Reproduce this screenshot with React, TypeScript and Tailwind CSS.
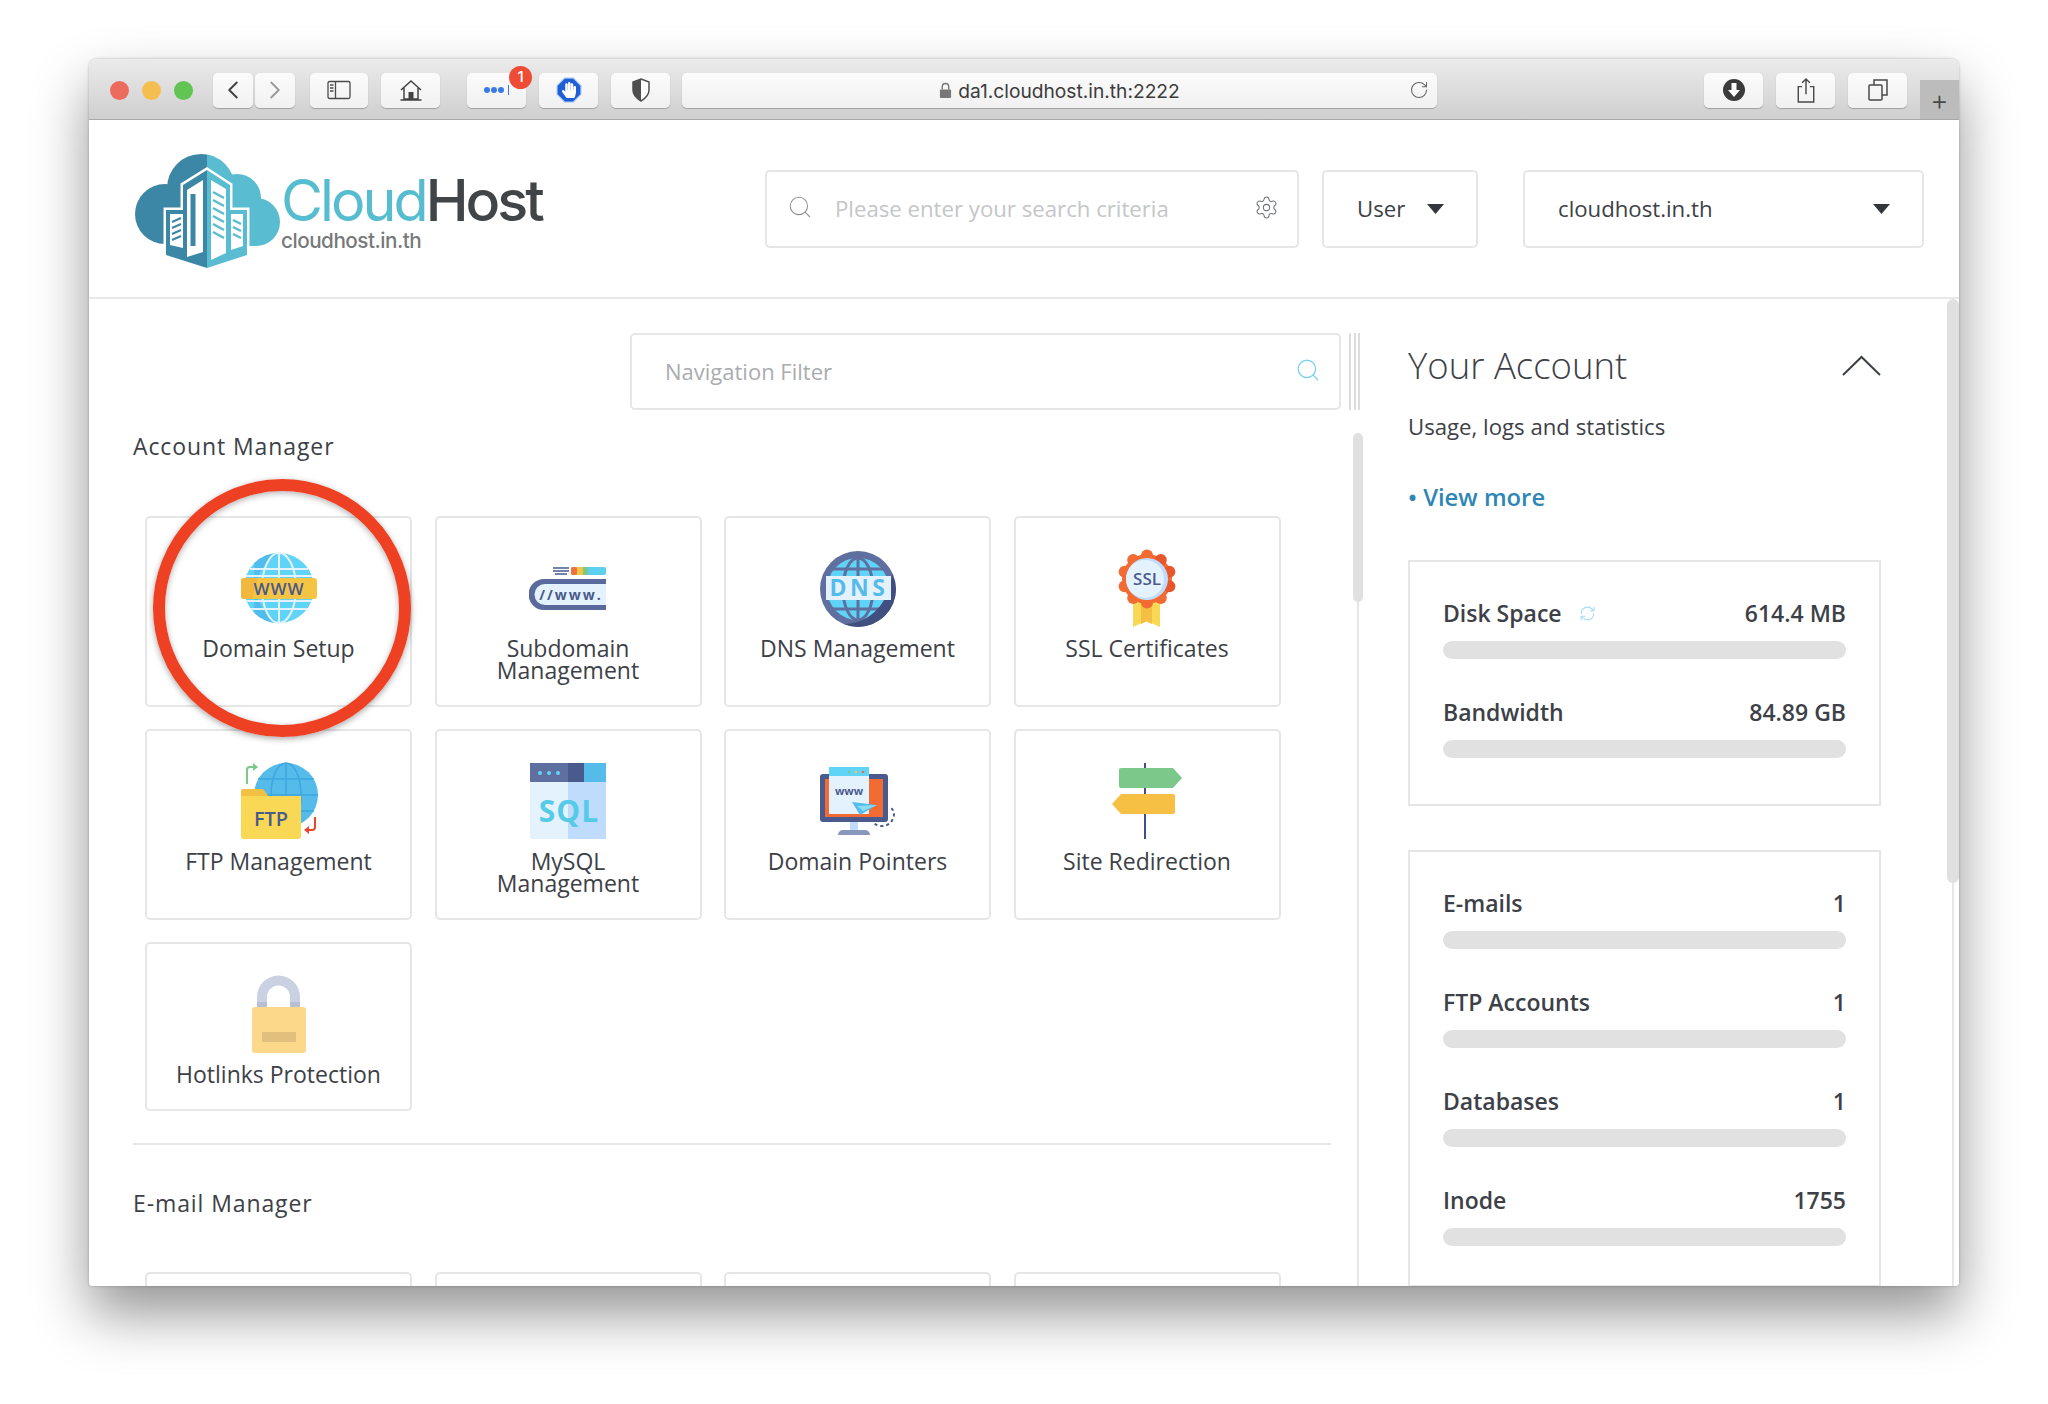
import { ChevronLeft, ChevronRight, RefreshCw, RotateCw, Search, Settings } from 'lucide-react'
import { FaHandPaper } from 'react-icons/fa'
import type { ReactNode } from 'react'

const ink = '#4a5a8c'
const sky = '#55bbeb'
const pale = '#e4f2fe'

function Box({ children }: { children: ReactNode }) {
  return (
    <svg viewBox="0 0 78 78" className="w-[78px] h-[78px] shrink-0">
      {children}
    </svg>
  )
}

function SvgLabel({ x, y, size, fill, children, spacing = 0, weight = '700' }: { x: number; y: number; size: number; fill: string; children: string; spacing?: number; weight?: string }) {
  return (
    <text x={x} y={y} fontSize={size} fill={fill} fontWeight={weight} textAnchor="middle" letterSpacing={spacing} fontFamily="'Open Sans', sans-serif">
      {children}
    </text>
  )
}

function DomainIcon() {
  return (
    <Box>
      <circle cx="39" cy="39" r="35" fill="#5fd4f6" />
      <path d="M39 4a35 35 0 0 0-24.700 10v50a35 35 0 0 0 24.700 10c-14-10-23-20-23-35s9-25 23-35z" fill="#50bdec" />
      <g fill="none" stroke="#e3f3fe" strokeWidth="2">
        <ellipse cx="39" cy="39" rx="17" ry="35" />
        <path d="M39 4v70M10 20h58M6 27h66M6 52h66M10 60h58" />
      </g>
      <rect x="1" y="29" width="76" height="21" rx="3" fill="#f5c445" />
      <path d="M1 32a3 3 0 0 1 3-3h14l-6 21H4a3 3 0 0 1-3-3z" fill="#f2b83e" />
      <SvgLabel x={39} y={46} size={17} fill={ink} spacing={1} weight="600">WWW</SvgLabel>
    </Box>
  )
}

function SubdomainIcon() {
  return (
    <Box>
      <path d="M77 30H15a15 15 0 0 0 0 31h62z" fill="#5a6a9c" />
      <path d="M77 35H16a10.500 10.500 0 0 0 0 21h61z" fill={pale} />
      <g stroke={ink} strokeWidth="1.500">
        <path d="M24 19h16M24 22h16M26 25h12" />
      </g>
      <rect x="42" y="18" width="35" height="8" rx="2" fill="#5ed0ef" />
      <rect x="42" y="18" width="6" height="8" rx="2" fill="#f2703a" />
      <rect x="48" y="18" width="6" height="8" fill="#f5c445" />
      <rect x="54" y="18" width="5" height="8" fill="#7cc78a" />
      <SvgLabel x={42} y={51} size={14} fill={ink} spacing={2}>//www.</SvgLabel>
    </Box>
  )
}

function DnsIcon() {
  return (
    <Box>
      <circle cx="39" cy="40" r="38" fill="#5f6f9f" />
      <circle cx="39" cy="40" r="31" fill="#5fd4f6" />
      <g fill="none" stroke="#5f6f9f" strokeWidth="3">
        <ellipse cx="39" cy="40" rx="15" ry="31" />
        <path d="M39 8v64M12 20h54M12 60h54" />
      </g>
      <path d="M77 40a38 38 0 0 1-38 38 36 36 0 0 1-14-3c20 0 44-14 48-50a38 38 0 0 1 4 15z" fill="#414f80" />
      <rect x="7" y="27" width="65" height="24" fill={pale} />
      <SvgLabel x={40} y={47} size={23} fill={sky} spacing={3.5} weight="700">DNS</SvgLabel>
    </Box>
  )
}

function SslIcon() {
  const scallops = Array.from({ length: 10 }, (_, i) => {
    const a = (i / 10) * Math.PI * 2 - Math.PI / 2
    return { cx: 39 + Math.cos(a) * 23.500, cy: 30 + Math.sin(a) * 23.500 }
  })
  return (
    <Box>
      <path d="M25 50h27v28l-13.500-6L25 78z" fill="#f9d855" />
      <path d="M33 50h11v25l-5.500-2.500L33 75z" fill="#f4c043" />
      <circle cx="39" cy="30" r="25" fill="#f26b33" />
      {scallops.map((s, i) => (
        <circle key={i} cx={s.cx} cy={s.cy} r="6" fill={i > 0 && i < 4 ? '#e8562c' : '#f26b33'} />
      ))}
      <circle cx="39" cy="30" r="21" fill="#bfdcfd" />
      <circle cx="37" cy="30" r="19" fill={pale} />
      <SvgLabel x={39} y={36} size={17} fill={ink} weight="600">SSL</SvgLabel>
    </Box>
  )
}

function FtpIcon() {
  return (
    <Box>
      <circle cx="46" cy="33" r="32" fill={sky} />
      <g fill="none" stroke="#3fa6de" strokeWidth="1.500">
        <ellipse cx="46" cy="33" rx="15" ry="32" />
        <path d="M46 1v64M18 17h56M14 33h64M18 49h56" />
      </g>
      <path d="M1 29a2 2 0 0 1 2-2h20l6 8h30a2 2 0 0 1 2 2v8H1z" fill="#f4c043" />
      <path d="M1 34h60v40a3 3 0 0 1-3 3H4a3 3 0 0 1-3-3z" fill="#f9d855" />
      <SvgLabel x={31} y={64} size={20} fill={ink} weight="600">FTP</SvgLabel>
      <path d="M7 22V8a3 3 0 0 1 3-3h5" fill="none" stroke="#7cc78a" strokeWidth="2" />
      <path d="M13 1l5 4-5 4z" fill="#7cc78a" />
      <path d="M75 55v10a3 3 0 0 1-3 3h-5" fill="none" stroke="#e5482d" strokeWidth="2" />
      <path d="M69 64l-5 4 5 4z" fill="#e5482d" />
    </Box>
  )
}

function SqlIcon() {
  return (
    <Box>
      <rect x="1" y="1" width="76" height="76" rx="2" fill={pale} />
      <rect x="39" y="19" width="38" height="58" fill="#bfdcfd" />
      <rect x="1" y="1" width="38" height="19" fill="#5f6f9f" />
      <rect x="39" y="1" width="16" height="19" fill={ink} />
      <rect x="55" y="1" width="22" height="19" fill={sky} />
      <circle cx="11" cy="11" r="2" fill="#5fd4f6" />
      <circle cx="20" cy="11" r="2" fill="#5fd4f6" />
      <circle cx="29" cy="11" r="2" fill="#5fd4f6" />
      <SvgLabel x={40} y={60} size={30} fill="#55cbe8" spacing={1}>SQL</SvgLabel>
    </Box>
  )
}

function PointerIcon() {
  return (
    <Box>
      <rect x="1" y="12" width="68" height="48" rx="3" fill={ink} />
      <rect x="6" y="17" width="58" height="38" fill="#f26b33" />
      <rect x="31" y="60" width="8" height="8" fill="#bfdcfd" />
      <path d="M19 73a5 5 0 0 1 5-5h22a5 5 0 0 1 5 5z" fill="#8a97bd" />
      <rect x="10" y="5" width="40" height="47" rx="1" fill={pale} />
      <rect x="10" y="5" width="40" height="9" fill="#5fd4f6" />
      <circle cx="30" cy="10" r="1.300" fill="#7cc78a" />
      <circle cx="37" cy="10" r="1.300" fill="#f5c445" />
      <circle cx="44" cy="10" r="1.300" fill="#f26b33" />
      <SvgLabel x={30} y={33} size={11} fill={ink}>www</SvgLabel>
      <path d="M33 40l25 3-17 10z" fill="#55bbeb" />
      <path d="M38 44l20-1-14 6z" fill="#8cdcf4" />
      <path d="M52 57a12 12 0 0 0 20 3c4-5 4-11 0-14" fill="none" stroke={ink} strokeWidth="2" strokeDasharray="3 3" />
    </Box>
  )
}

function SignIcon() {
  return (
    <Box>
      <rect x="36" y="1" width="2" height="76" fill="#3f4f8c" />
      <path d="M13 6h52l9 10-9 10H13a2 2 0 0 1-2-2V8a2 2 0 0 1 2-2z" fill="#7cc78a" />
      <path d="M13 32h52a2 2 0 0 1 2 2v16a2 2 0 0 1-2 2H13L4 42z" fill="#f5c043" />
    </Box>
  )
}

function LockIcon() {
  return (
    <Box>
      <path d="M17 32V22a21.500 21.500 0 0 1 43 0v10h-10V22a11.500 11.500 0 0 0-23 0v10z" fill="#c9d1e3" />
      <rect x="17" y="27" width="10" height="6" fill="#b6bfd4" />
      <rect x="50" y="27" width="10" height="6" fill="#b6bfd4" />
      <rect x="12" y="32" width="54" height="46" rx="3" fill="#fbd88a" />
      <rect x="22" y="57" width="34" height="10" fill="#e0c07c" />
    </Box>
  )
}

function CloudShape({ fill, clip }: { fill: string; clip: string }) {
  return (
    <g fill={fill} clipPath={clip}>
      <circle cx="30" cy="60" r="30" />
      <circle cx="66" cy="34" r="34" />
      <circle cx="102" cy="44" r="24" />
      <circle cx="121" cy="68" r="24" />
      <rect x="30" y="50" width="92" height="42" />
    </g>
  )
}

function CloudLogo() {
  const building = 'M72 16l23 15v25l17 0v45l-40 13-41-13V56l17 0V31z'
  return (
    <svg viewBox="0 0 145 114" className="w-[145px] h-[114px] shrink-0">
      <defs>
        <clipPath id="logo-left"><rect x="0" y="0" width="72" height="114" /></clipPath>
        <clipPath id="logo-right"><rect x="72" y="0" width="73" height="114" /></clipPath>
      </defs>
      <CloudShape fill="#3d87a6" clip="url(#logo-left)" />
      <CloudShape fill="#59bcd0" clip="url(#logo-right)" />
      <path d={building} fill="#ffffff" stroke="#ffffff" strokeWidth="5" />
      <path d={building} fill="#3d87a6" clipPath="url(#logo-left)" />
      <path d={building} fill="#59bcd0" clipPath="url(#logo-right)" />
      <path d="M52 36l16-10v72l-16 5zM35 60h13v34l-13-3z" fill="#ffffff" />
      <path d="M76 26l15 9v64l-15 7zM96 60h12v32l-12 4z" fill="#ffffff" />
      <g stroke="#3d87a6" strokeWidth="2">
        <path d="M37 68l9-4M37 74l9-4M37 80l9-4M37 86l9-4" />
        <path d="M58 40v52" strokeWidth="5" />
      </g>
      <g stroke="#59bcd0" strokeWidth="2.500">
        <path d="M78 38l11 6M78 46l11 6M78 54l11 6M78 62l11 6M78 70l11 6M78 78l11 6M98 66l8 4M98 73l8 4M98 80l8 4" />
      </g>
    </svg>
  )
}

function ToolBtn({ children, className }: { children: ReactNode; className: string }) {
  return (
    <div className={`relative h-[35px] flex items-center justify-center rounded-[5px] bg-gradient-to-b from-[#fbfbfb] to-[#f1f1f1] shadow-[0_1px_1px_rgba(0,0,0,0.25)] ${className}`}>
      {children}
    </div>
  )
}

function Toolbar() {
  return (
    <div className="relative h-[61px] shrink-0 flex items-center pl-[21px] pt-[2px] bg-gradient-to-b from-[#ebebeb] to-[#cfcfcf] border-b border-[#a8a8a8]">
      <span className="w-[19px] h-[19px] rounded-full bg-[#ed6a5e]" />
      <span className="ml-[13px] w-[19px] h-[19px] rounded-full bg-[#f5bf4f]" />
      <span className="ml-[13px] w-[19px] h-[19px] rounded-full bg-[#61c554]" />
      <ToolBtn className="ml-[20px] w-[40px]">
        <ChevronLeft className="w-[30px] h-[30px] text-[#3f3f3f]" strokeWidth={1.5} />
      </ToolBtn>
      <ToolBtn className="ml-[2px] w-[40px]">
        <ChevronRight className="w-[30px] h-[30px] text-[#9a9a9a]" strokeWidth={1.5} />
      </ToolBtn>
      <ToolBtn className="ml-[15px] w-[58px]">
        <svg viewBox="0 0 24 20" className="w-[24px] h-[20px]" fill="none" stroke="#4a4a4a" strokeWidth="1.300">
          <rect x="1" y="1.500" width="22" height="17" rx="1.500" />
          <path d="M8.500 1.500v17M3 5h3.500M3 8h3.500M3 11h3.500" />
        </svg>
      </ToolBtn>
      <ToolBtn className="ml-[13px] w-[59px]">
        <svg viewBox="0 0 24 24" className="w-[24px] h-[24px]" fill="none" stroke="#444444" strokeWidth="1.500">
          <path d="M2 12L12 3l10 9M5 10v11h14V10M1.500 22h21" />
          <rect x="9.500" y="14" width="5" height="7" fill="#444444" stroke="none" />
        </svg>
      </ToolBtn>
      <ToolBtn className="ml-[27px] w-[59px]">
        <svg viewBox="0 0 28 10" className="w-[28px] h-[10px]">
          <circle cx="4" cy="5" r="3" fill="#3a78e8" />
          <circle cx="11" cy="5" r="3" fill="#3a78e8" />
          <circle cx="18" cy="5" r="3" fill="#3a78e8" />
          <rect x="25" y="0" width="1" height="10" fill="#3a78e8" />
        </svg>
        <span className="absolute -top-[7px] -right-[6px] w-[23px] h-[23px] rounded-full bg-[#ee4c36] text-white text-[15px] font-medium flex items-center justify-center font-['Inter',sans-serif]">1</span>
      </ToolBtn>
      <ToolBtn className="ml-[13px] w-[59px]">
        <svg viewBox="0 0 24 24" className="w-[26px] h-[26px]">
          <path d="M8 1h8l7 7v8l-7 7H8l-7-7V8z" fill="#1f5fd6" stroke="#9cc6f2" strokeWidth="1" />
        </svg>
        <FaHandPaper className="absolute w-[14px] h-[16px] text-white" />
      </ToolBtn>
      <ToolBtn className="ml-[13px] w-[59px]">
        <svg viewBox="0 0 20 24" className="w-[20px] h-[24px]">
          <path d="M10 1l8 3v8c0 5-3 8-8 11-5-3-8-6-8-11V4z" fill="#ffffff" stroke="#4f4f4f" strokeWidth="1.500" />
          <path d="M10 1L2 4v8c0 5 3 8 8 11z" fill="#4f4f4f" />
        </svg>
      </ToolBtn>
      <ToolBtn className="ml-[12px] w-[755px] text-[19.200px] text-[#3c3c3c] font-['Inter',sans-serif]">
        <svg viewBox="0 0 14 18" className="w-[13px] h-[17px] mr-[6px]">
          <path d="M3.500 8V5a3.500 3.500 0 0 1 7 0v3" fill="none" stroke="#777777" strokeWidth="1.500" />
          <rect x="1" y="8" width="12" height="9" rx="1" fill="#777777" />
        </svg>
        <span className="mt-[3px]">da1.cloudhost.in.th:2222</span>
        <RotateCw className="absolute right-[8px] w-[20px] h-[22px] text-[#666666]" strokeWidth={1.300} />
      </ToolBtn>
      <ToolBtn className="ml-[267px] w-[59px]">
        <svg viewBox="0 0 24 24" className="w-[24px] h-[24px]">
          <circle cx="12" cy="12" r="11" fill="#3b3b3b" />
          <path d="M9.500 5h5v7H18l-6 7-6-7h3.500z" fill="#ffffff" />
        </svg>
      </ToolBtn>
      <ToolBtn className="ml-[13px] w-[59px]">
        <svg viewBox="0 0 20 28" className="w-[20px] h-[27px]" fill="none" stroke="#4a4a4a" strokeWidth="1.500">
          <path d="M6 10H2v16h16V10h-4M10 18V2M6 6l4-4 4 4" />
        </svg>
      </ToolBtn>
      <ToolBtn className="ml-[13px] w-[59px]">
        <svg viewBox="0 0 24 24" className="w-[24px] h-[24px]" fill="none" stroke="#4a4a4a" strokeWidth="1.500">
          <rect x="3" y="7" width="13" height="15" rx="1" />
          <path d="M8 7V2h13v15h-5" />
        </svg>
      </ToolBtn>
      <div className="absolute right-0 bottom-0 w-[39px] h-[39px] flex items-center justify-center bg-[#bcbcbc] text-[#4a4a4a] text-[28px] font-light leading-none font-['Inter',sans-serif]">+</div>
    </div>
  )
}

function Caret() {
  return (
    <svg viewBox="0 0 17 10" className="w-[17px] h-[10px]">
      <path d="M0 0h17l-8.500 10z" fill="#33373b" />
    </svg>
  )
}

function Header() {
  return (
    <div className="h-[179px] shrink-0 flex items-start border-b-2 border-[#e8e8e8] bg-white">
      <div className="ml-[46px] mt-[34px] flex items-start">
        <CloudLogo />
        <div className="flex flex-col ml-[1px] mt-[19px] font-['Inter',sans-serif]">
          <div className="text-[57.500px] leading-[54px] tracking-[-3px] text-[#56bcd0]">
            Cloud<span className="text-[#424548] font-medium">Host</span>
          </div>
          <div className="mt-[2px] text-[20.700px] leading-[24px] tracking-[-0.5px] font-medium text-[#77797b]">cloudhost.in.th</div>
        </div>
      </div>
      <div className="ml-auto mr-[35px] mt-[50px] flex text-[22.200px] text-[#3d4147]">
        <div className="w-[534px] h-[78px] flex items-center border-2 border-[#e6e6e6] rounded-[5px] pl-[20px] pr-[18px]">
          <Search className="w-[26px] h-[26px] text-[#8f9397] -mt-[4px]" strokeWidth={1} />
          <span className="ml-[22px] text-[#c4c6c8]">Please enter your search criteria</span>
          <Settings className="ml-auto w-[25px] h-[25px] text-[#6f7377] -mt-[4px]" strokeWidth={1} />
        </div>
        <div className="ml-[23px] w-[156px] h-[78px] flex items-center border-2 border-[#e6e6e6] rounded-[5px] pl-[33px]">
          User
          <span className="ml-[22px]"><Caret /></span>
        </div>
        <div className="ml-[45px] w-[401px] h-[78px] flex items-center border-2 border-[#e6e6e6] rounded-[5px] pl-[33px] pr-[32px]">
          cloudhost.in.th
          <span className="ml-auto"><Caret /></span>
        </div>
      </div>
    </div>
  )
}

function Card({ icon, label, circled }: { icon: ReactNode; label: string; circled?: boolean }) {
  return (
    <div className="relative flex flex-col items-center border-2 border-[#e6e6e6] rounded-[5px] pt-[31px] pb-[24px] px-[20px]">
      {icon}
      <div className="mt-[10px] text-[23px] leading-[22px] font-medium text-[#3d4147] text-center whitespace-pre-line">{label}</div>
      {circled && (
        <span className="absolute left-[6px] -top-[39px] w-[258px] h-[258px] rounded-full border-[12px] border-[#ee4124] shadow-[0_2px_6px_rgba(0,0,0,0.35),inset_0_2px_6px_rgba(0,0,0,0.3)] z-10" />
      )}
    </div>
  )
}

function MainPane() {
  return (
    <div className="w-[1252px] shrink-0 flex flex-col pl-[44px]">
      <div className="self-end mt-[34px] w-[711px] h-[77px] shrink-0 flex items-center border-2 border-[#e6e6e6] rounded-[5px] pl-[33px] pr-[18px] text-[22px] text-[#a9acaf]">
        Navigation Filter
        <Search className="ml-auto w-[26px] h-[26px] text-[#7fd0f2] -mt-[4px]" strokeWidth={1.2} />
      </div>
      <h2 className="mt-[21px] text-[23px] leading-[30px] tracking-[0.9px] font-medium text-[#3d4147]">Account Manager</h2>
      <div className="mt-[55px] ml-[12px] grid grid-cols-[267px_267px_267px_267px] gap-x-[22.500px] gap-y-[22px] items-stretch">
        <Card icon={<DomainIcon />} label="Domain Setup" circled />
        <Card icon={<SubdomainIcon />} label={'Subdomain\nManagement'} />
        <Card icon={<DnsIcon />} label="DNS Management" />
        <Card icon={<SslIcon />} label="SSL Certificates" />
        <Card icon={<FtpIcon />} label="FTP Management" />
        <Card icon={<SqlIcon />} label={'MySQL\nManagement'} />
        <Card icon={<PointerIcon />} label="Domain Pointers" />
        <Card icon={<SignIcon />} label="Site Redirection" />
        <Card icon={<LockIcon />} label="Hotlinks Protection" />
      </div>
      <div className="mt-[32px] w-[1198px] h-[2px] shrink-0 bg-[#e6e6e6]" />
      <h2 className="mt-[43px] text-[23px] leading-[30px] tracking-[0.9px] font-medium text-[#3d4147]">E-mail Manager</h2>
      <div className="mt-[54px] ml-[12px] grid grid-cols-[267px_267px_267px_267px] gap-x-[22.500px]">
        <div className="h-[60px] border-2 border-[#e6e6e6] rounded-[5px]" />
        <div className="h-[60px] border-2 border-[#e6e6e6] rounded-[5px]" />
        <div className="h-[60px] border-2 border-[#e6e6e6] rounded-[5px]" />
        <div className="h-[60px] border-2 border-[#e6e6e6] rounded-[5px]" />
      </div>
    </div>
  )
}

function Splitter() {
  return (
    <div className="w-[67px] shrink-0 flex flex-col pl-[8px]">
      <div className="mt-[34px] w-[11px] h-[77px] shrink-0 flex justify-between">
        <span className="w-[2px] bg-[#dcdcdc]" />
        <span className="w-[2px] bg-[#dcdcdc]" />
        <span className="w-[2px] bg-[#dcdcdc]" />
      </div>
      <div className="mt-[23px] ml-[4px] w-[10px] h-[169px] shrink-0 rounded-full bg-[#e0e0e0]" />
      <div className="ml-[8px] w-[2px] flex-1 bg-[#e6e6e6]" />
    </div>
  )
}

function Stat({ label, value, spin }: { label: string; value: string; spin?: boolean }) {
  return (
    <div className="mb-[39px]">
      <div className="h-[28px] flex items-center text-[23px] leading-[28px] font-semibold text-[#3d4147]">
        {label}
        {spin && <RefreshCw className="ml-[17px] w-[17px] h-[17px] text-[#a5dcf6]" strokeWidth={1.5} />}
        <span className="ml-auto">{value}</span>
      </div>
      <div className="mt-[14px] h-[18px] rounded-full bg-[#e1e1e1]" />
    </div>
  )
}

function AccountPane() {
  return (
    <div className="w-[473px] shrink-0 flex flex-col">
      <div className="mt-[42px] h-[48px] shrink-0 flex items-center justify-between">
        <h1 className="text-[36.500px] leading-[48px] font-light text-[#3d4147]">Your Account</h1>
        <svg viewBox="0 0 39 21" className="w-[39px] h-[21px]" fill="none" stroke="#3d4147" strokeWidth="2">
          <path d="M1 20L19.500 2 38 20" />
        </svg>
      </div>
      <p className="mt-[23px] text-[22.200px] leading-[30px] text-[#3d4147]">Usage, logs and statistics</p>
      <p className="mt-[40px] text-[23.800px] leading-[30px] font-semibold text-[#2e86b5]">• View more</p>
      <div className="mt-[48px] border-2 border-[#e6e6e6] pt-[37px] pl-[33px] pr-[33px] pb-[7px]">
        <Stat label="Disk Space" value="614.4 MB" spin />
        <Stat label="Bandwidth" value="84.89 GB" />
      </div>
      <div className="mt-[44px] flex-1 border-2 border-[#e6e6e6] pt-[37px] pl-[33px] pr-[33px]">
        <Stat label="E-mails" value="1" />
        <Stat label="FTP Accounts" value="1" />
        <Stat label="Databases" value="1" />
        <Stat label="Inode" value="1755" />
      </div>
    </div>
  )
}

export default function App() {
  return (
    <div className="w-[2048px] h-[1404px] overflow-hidden bg-white pt-[59px] pl-[89px] font-['Open_Sans',sans-serif]">
      <div className="w-[1870px] h-[1227px] flex flex-col rounded-t-[8px] rounded-b-[4px] overflow-hidden shadow-[0_28px_55px_rgba(0,0,0,0.42),0_0_3px_rgba(0,0,0,0.25)]">
        <Toolbar />
        <Header />
        <div className="flex-1 min-h-0 flex bg-white overflow-hidden">
          <MainPane />
          <Splitter />
          <AccountPane />
          <div className="ml-[66px] w-[12px] flex flex-col items-center">
            <div className="w-[12px] h-[584px] shrink-0 rounded-full bg-[#e0e0e0]" />
            <div className="w-[2px] flex-1 bg-[#e6e6e6]" />
          </div>
        </div>
      </div>
    </div>
  )
}
